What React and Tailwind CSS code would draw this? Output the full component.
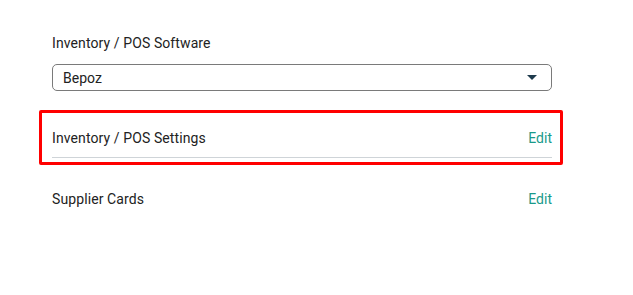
export default function App() {
  return (
    <div
      className="w-[633px] h-[295px] bg-white text-[#222222] text-[14px]"
      style={{ fontFamily: "Roboto, 'Liberation Sans', sans-serif" }}
    >
      <div className="pt-[33px] pl-[52px] w-[552px]">
        <div className="leading-[20px] tracking-[0.1px]">Inventory / POS Software</div>
        <div className="mt-[11px] h-[27px] border border-[#7a7a7a] rounded-[5px] flex items-center justify-between pl-[10px] pr-[14px]">
          <span className="leading-[20px]">Bepoz</span>
          <svg width="10" height="5" viewBox="0 0 10 5">
            <path d="M0 0h10L5 5z" fill="#1e3a4c" />
          </svg>
        </div>

        <div className="mt-[19px] -ml-[13px] w-[524px] border-[3px] border-[#ff0000] rounded-[2px] pl-[10px] pr-[8px] pt-[15px] pb-[4px]">
          <div className="flex items-center justify-between leading-[20px]">
            <span className="tracking-[0.1px]">Inventory / POS Settings</span>
            <span className="text-[#1a9a8a]">Edit</span>
          </div>
          <div className="mt-[9px] h-px bg-[#cfd4d8]" />
        </div>

        <div className="mt-[24px] flex items-center justify-between leading-[20px]">
          <span className="tracking-[0.1px]">Supplier Cards</span>
          <span className="text-[#1a9a8a]">Edit</span>
        </div>
      </div>
    </div>
  );
}
